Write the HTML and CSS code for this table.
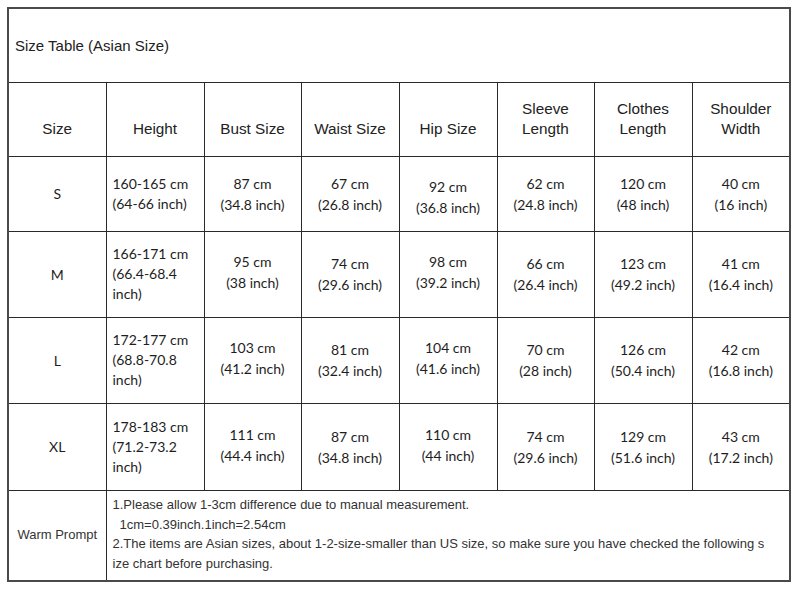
FILE: index.html
```html
<!DOCTYPE html>
<html>
<head>
<meta charset="utf-8">
<link rel="stylesheet" href="styles.css">
</head>
<body>
<table class="size-table">
  <colgroup>
    <col class="c1"><col class="c2"><col class="c3"><col class="c4"><col class="c5"><col class="c6"><col class="c7"><col class="c8">
  </colgroup>
  <tr class="r-title"><td colspan="8" class="title">Size Table (Asian Size)</td></tr>
  <tr class="r-head">
    <th class="single">Size</th><th class="single">Height</th><th class="single">Bust Size</th><th class="single">Waist Size</th><th class="single">Hip Size</th>
    <th>Sleeve<br>Length</th><th>Clothes<br>Length</th><th>Shoulder<br>Width</th>
  </tr>
  <tr class="r-s">
    <td class="sz">S</td>
    <td class="ht">160-165 cm<br>(64-66 inch)</td>
    <td>87 cm<br>(34.8 inch)</td>
    <td>67 cm<br>(26.8 inch)</td>
    <td class="low">92 cm<br>(36.8 inch)</td>
    <td>62 cm<br>(24.8 inch)</td>
    <td>120 cm<br>(48 inch)</td>
    <td>40 cm<br>(16 inch)</td>
  </tr>
  <tr class="r-m">
    <td class="sz">M</td>
    <td class="ht">166-171 cm<br>(66.4-68.4<br>inch)</td>
    <td class="up">95 cm<br>(38 inch)</td>
    <td>74 cm<br>(29.6 inch)</td>
    <td class="up">98 cm<br>(39.2 inch)</td>
    <td>66 cm<br>(26.4 inch)</td>
    <td>123 cm<br>(49.2 inch)</td>
    <td>41 cm<br>(16.4 inch)</td>
  </tr>
  <tr class="r-l">
    <td class="sz">L</td>
    <td class="ht">172-177 cm<br>(68.8-70.8<br>inch)</td>
    <td class="up">103 cm<br>(41.2 inch)</td>
    <td>81 cm<br>(32.4 inch)</td>
    <td class="up">104 cm<br>(41.6 inch)</td>
    <td>70 cm<br>(28 inch)</td>
    <td>126 cm<br>(50.4 inch)</td>
    <td>42 cm<br>(16.8 inch)</td>
  </tr>
  <tr class="r-xl">
    <td class="sz">XL</td>
    <td class="ht">178-183 cm<br>(71.2-73.2<br>inch)</td>
    <td class="up">111 cm<br>(44.4 inch)</td>
    <td>87 cm<br>(34.8 inch)</td>
    <td class="up">110 cm<br>(44 inch)</td>
    <td>74 cm<br>(29.6 inch)</td>
    <td>129 cm<br>(51.6 inch)</td>
    <td>43 cm<br>(17.2 inch)</td>
  </tr>
  <tr class="r-prompt">
    <td class="wp">Warm Prompt</td>
    <td colspan="7" class="notes">
      <span class="line">1.Please allow 1-3cm difference due to manual measurement.</span>
      <span class="line indent">1cm=0.39inch.1inch=2.54cm</span>
      <span class="line">2.The items are Asian sizes, about 1-2-size-smaller than US size, so make sure you have checked the following s</span>
      <span class="line">ize chart before purchasing.</span>
    </td>
  </tr>
</table>
</body>
</html>
```

FILE: styles.css
```css
html, body {
  margin: 0;
  padding: 0;
  background: #ffffff;
}

body {
  padding: 7px 0 0 7px;
}

.size-table {
  border-collapse: collapse;
  table-layout: fixed;
  width: 784px;
  color: #1e1e1e;
  border: 2px solid #4a4a4a;
}

.c1 { width: 98px; }
.c2 { width: 98px; }
.c3 { width: 97px; }
.c4 { width: 98px; }
.c5 { width: 98px; }
.c6 { width: 97px; }
.c7 { width: 98px; }
.c8 { width: 98px; }

.size-table td,
.size-table th {
  border: 1px solid #2a2a2a;
  padding: 0;
  text-align: center;
  vertical-align: middle;
  font-family: Lato, "Open Sans", sans-serif;
  font-size: 14px;
  font-weight: normal;
  line-height: 21px;
}

.r-title { height: 74px; }
.r-head { height: 74px; }
.r-s { height: 75px; }
.r-m { height: 86px; }
.r-l { height: 86px; }
.r-xl { height: 87px; }
.r-prompt { height: 91px; }

.size-table .title {
  text-align: left;
  padding-left: 6px;
  font-family: "Liberation Sans", Arial, sans-serif;
  font-size: 15px;
  color: #222;
}

.size-table th {
  font-family: "Liberation Sans", Arial, sans-serif;
  font-size: 15.3px;
  line-height: 20px;
  color: #222;
}

.size-table th.single {
  padding-top: 20px;
}

.size-table .ht {
  text-align: left;
  padding-left: 6px;
  line-height: 20px;
}

.size-table .low {
  padding-top: 6px;
}

.size-table .up {
  padding-bottom: 4px;
}

.size-table .wp {
  font-family: "Liberation Sans", Arial, sans-serif;
  font-size: 13px;
  color: #333;
  padding-bottom: 2px;
}

.size-table .notes {
  text-align: left;
  padding-left: 6px;
  padding-bottom: 2px;
  font-family: "Liberation Sans", Arial, sans-serif;
  font-size: 13px;
  line-height: 19.5px;
  color: #333;
}

.line {
  display: block;
  white-space: nowrap;
}

.indent {
  padding-left: 7px;
}
```
